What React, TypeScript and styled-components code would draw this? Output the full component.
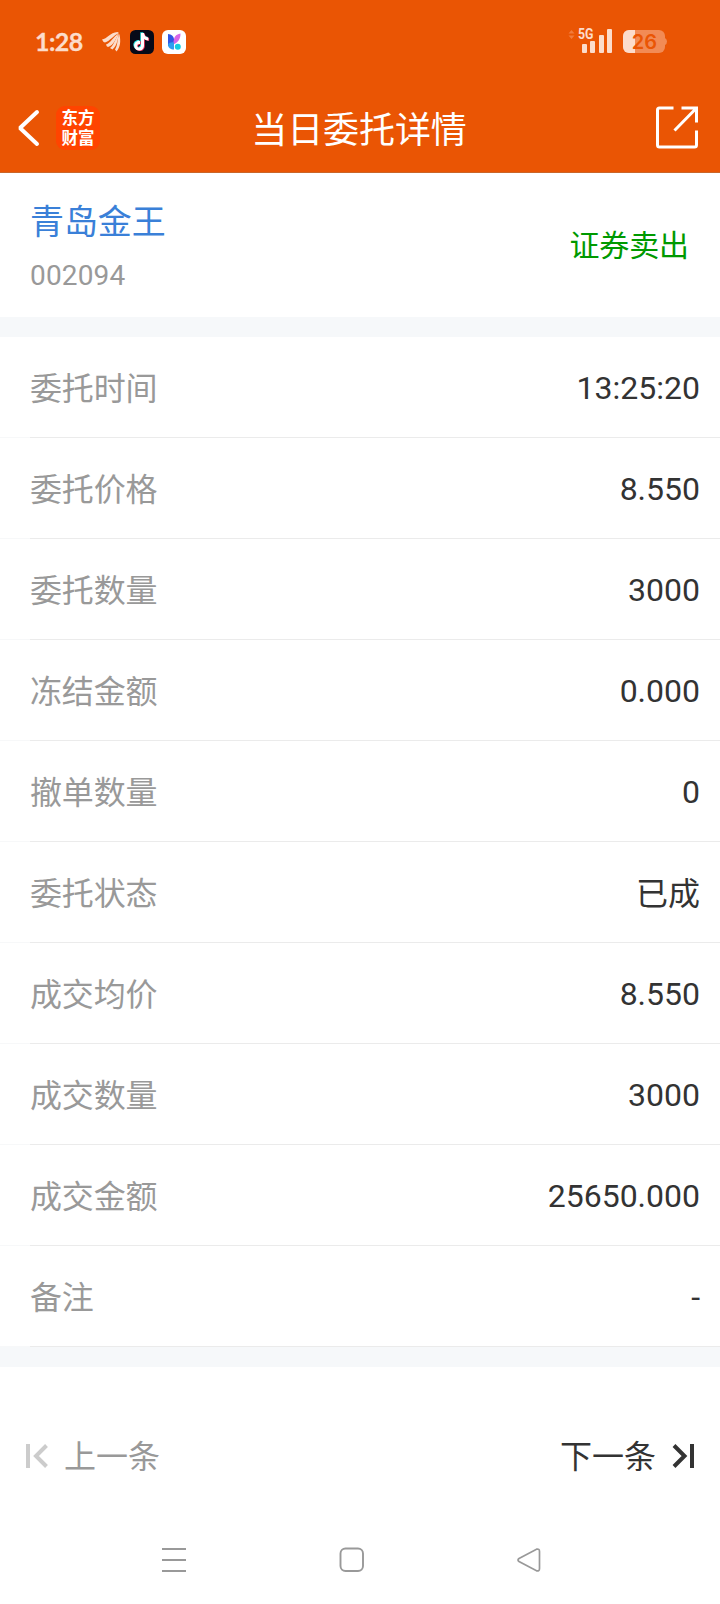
import React from "react";
import styled, { createGlobalStyle } from "styled-components";

const GlobalStyle = createGlobalStyle`
  * { box-sizing: border-box; }
  body {
    margin: 0;
    background: #fff;
    font-family: Roboto, "Noto Sans CJK SC", sans-serif;
    color: #333;
  }
  svg { display: block; flex: none; overflow: visible; }
`;

const Screen = styled.main`
  width: 720px;
  height: 1604px;
  display: flex;
  flex-direction: column;
  background: #fff;
  overflow: hidden;
`;

const Header = styled.header`
  height: 173px;
  background: #ea5504;
  border-bottom: 1px solid #c9662a;
  color: #fff;
`;

const StatusBar = styled.div`
  height: 84px;
  padding: 0 53px 0 35px;
  display: flex;
  align-items: center;
  justify-content: space-between;
  color: #fcdccb;
`;

const StatusGroup = styled.div<{ $gap: number }>`
  display: flex;
  align-items: center;
  gap: ${(p) => p.$gap}px;
`;

const Clock = styled.span`
  width: 49px;
  margin-right: 10px;
  padding-bottom: 3px;
  font: 700 25px/24px Lato, sans-serif;
  letter-spacing: -0.6px;
  -webkit-text-stroke: 0.3px #fcdccb;
  white-space: nowrap;
`;

const TitleBar = styled.div`
  height: 88px;
  display: grid;
  grid-template-columns: 1fr auto 1fr;
  align-items: center;
  padding: 0 21px 0 16px;
`;

const TitleLeft = styled.div`
  display: flex;
  align-items: center;
  gap: 15px;
`;

const TitleRight = styled.div`
  display: flex;
  justify-content: flex-end;
  padding-bottom: 2px;
`;

const Title = styled.h1`
  margin: 0;
  padding: 6px 0 0 3px;
  font-size: 36px;
  line-height: 44px;
  font-weight: 400;
  letter-spacing: -0.1px;
`;

const Logo = styled.div`
  width: 44px;
  height: 44px;
  border-radius: 9px;
  background: #ff4400;
  padding: 2px 0 0 5.500px;
  font: 700 16.5px/19.5px "Noto Sans CJK SC", sans-serif;
`;

const Stock = styled.section`
  height: 144px;
  padding: 2px 31px 0 30px;
  display: flex;
  justify-content: space-between;
  align-items: center;
`;

const StockName = styled.div`
  font-size: 34px;
  line-height: 46px;
  letter-spacing: -0.1px;
  color: #3a80d8;
`;

const StockCode = styled.div`
  margin-top: 13px;
  font-size: 28px;
  line-height: 36px;
  letter-spacing: 0.15px;
  color: #999;
`;

const Side = styled.div`
  padding-bottom: 1px;
  font-size: 30px;
  line-height: 40px;
  letter-spacing: -0.1px;
  color: #090;
`;

const Band = styled.div`
  height: 20px;
  background: #f6f8fa;
`;

const Row = styled.div`
  height: 101px;
  padding: 2px 20px 0 30px;
  display: flex;
  justify-content: space-between;
  align-items: center;
  background: linear-gradient(to right, #f7f8f9 30px, #ebebeb 30px) bottom / 100% 1px no-repeat;
  font-size: 32px;
  line-height: 44px;
`;

const Label = styled.span`
  color: #999;
  letter-spacing: -0.15px;
`;

const Value = styled.span<{ $numeric: boolean }>`
  padding-bottom: ${(p) => (p.$numeric ? 2 : 0)}px;
`;

const Pager = styled.nav`
  height: 180px;
  padding: 0 24px 2px 25px;
  display: flex;
  align-items: center;
  justify-content: space-between;
`;

const PagerButton = styled.button<{ $disabled?: boolean }>`
  padding: 0;
  border: 0;
  background: none;
  display: flex;
  align-items: center;
  gap: 15px;
  font: inherit;
  font-size: 32px;
  line-height: 44px;
  color: ${(p) => (p.$disabled ? "#999" : "#333")};
`;

const PagerText = styled.span`
  padding: 2px 1px 0 0;
`;

const SystemNav = styled.footer`
  height: 26px;
  padding: 0 178px 0 161px;
  display: flex;
  align-items: center;
  justify-content: space-between;
`;

const details = [
  ["委托时间", "13:25:20"],
  ["委托价格", "8.550"],
  ["委托数量", "3000"],
  ["冻结金额", "0.000"],
  ["撤单数量", "0"],
  ["委托状态", "已成"],
  ["成交均价", "8.550"],
  ["成交数量", "3000"],
  ["成交金额", "25650.000"],
  ["备注", "-"],
];

const WingIcon = () => (
  <svg width="20" height="22" viewBox="0 0 20 22" fill="#fcdccb">
    <path d="M0 8.500C5 8 8 1.500 15.500 1L17 2C12 4 8 10 3 11.500Q1 11 0 8.500Z" />
    <path d="M4 13.500C9 12 11 5.500 17 2.500C13.500 7 12.500 14 6 16Q4.500 15.500 4 13.500Z" />
    <path d="M8 17C13 13 13 7 17 3C15.500 8 15.500 14 10.500 18.500Z" />
    <path d="M13 18.500C16 14 15 8 17.300 3C19 10 18.500 16 14.500 20.500Z" />
  </svg>
);

const note =
  "M12 4h3c.3 2.700 1.800 4.200 4.300 4.500v3c-1.700 0-3.100-.5-4.300-1.400v6.300c0 6.500-9 6.800-9.800.9-.4-3.500 2.500-6 5.800-5.500v3.200c-3.500-.8-3.500 3.500-1 3.500 1.300 0 2-.9 2-2.200z";

const TikTokIcon = () => (
  <svg width="24" height="24" viewBox="0 0 24 24">
    <rect width="24" height="24" rx="5.500" fill="#070a18" />
    <g transform="translate(-1 -1)">
      <path d={note} fill="#25e5e2" transform="translate(-.8 -.7)" />
      <path d={note} fill="#f5345c" transform="translate(.8 .5)" />
      <path d={note} fill="#fff" />
    </g>
  </svg>
);

const LeafIcon = () => (
  <svg width="24" height="24" viewBox="0 0 24 24">
    <rect width="24" height="24" rx="6" fill="#fff" />
    <path d="M6 4C9.500 4.500 11.500 6 12 9V16H6Z" fill="#3156e4" />
    <path d="M12 9C12.500 6 15 4 18.500 3.500C18.500 9 16.500 12.500 11 14.500Z" fill="#d765e8" />
    <path d="M6 14.500C6.500 13 9.500 12 12 12.500V19.500C8.500 19.500 6 18 6 14.500Z" fill="#2f9df0" />
    <circle cx="15.800" cy="16.800" r="3" fill="#16cde0" />
  </svg>
);

const SignalIcon = () => (
  <svg width="46" height="26" viewBox="0 0 46 26" fill="#fcdccb">
    <path d="M.5 4.500 3.500 1 6.500 4.500ZM.5 6.500 3.500 10 6.500 6.500Z" fill="#f17b3d" />
    <text x="10" y="10" fontFamily="Roboto" fontSize="14.500" fontWeight="700" textLength="15.500" lengthAdjust="spacingAndGlyphs">5G</text>
    <rect x="14" y="15" width="5" height="9" rx="1" />
    <rect x="22" y="12" width="5" height="12" rx="1" />
    <rect x="31" y="6" width="5" height="18" rx="1" />
    <rect x="39" y="0" width="5" height="24" rx="1" />
  </svg>
);

const BatteryIcon = () => (
  <svg width="44" height="24" viewBox="0 0 44 24">
    <rect width="42" height="23" rx="6" fill="#f28b55" />
    <path d="M42 8q2 1 2 3.500t-2 3.500z" fill="#f28b55" />
    <path d="M12 0H6a6 6 0 0 0-6 6v11a6 6 0 0 0 6 6h6z" fill="#fcdccb" />
    <text x="21.500" y="19" textAnchor="middle" fontFamily="Inter" fontSize="20" fontWeight="600" fill="#ea5504">26</text>
  </svg>
);

const BackIcon = () => (
  <svg width="25" height="38" viewBox="0 0 25 38" fill="none" stroke="#fff" strokeWidth="4" strokeLinecap="round">
    <path d="M21 3 4 19 21 35" strokeLinejoin="bevel" />
  </svg>
);

const ShareIcon = () => (
  <svg width="43" height="43" viewBox="0 0 43 43" fill="none" stroke="#fff" strokeWidth="3">
    <path d="M17.500 2H3.500Q1.500 2 1.500 4V39Q1.500 41 3.500 41H38.500Q40.500 41 40.500 39V24.500M25.500 2H40.500V16.500M40.500 2 18.500 24.500" />
  </svg>
);

const StepIcon = ({ next = false }: { next?: boolean }) => (
  <svg width="24" height="24" viewBox="0 0 24 24" fill="none" stroke={next ? "#333" : "#ccc"} strokeWidth="4">
    {next ? <path d="M2 1.500 12.500 12 2 22.500M20 0V24" /> : <path d="M3 0V24M21.500 1.500 11 12 21.500 22.500" />}
  </svg>
);

const MenuIcon = () => (
  <svg width="26" height="26" viewBox="0 0 26 26" stroke="#999" strokeWidth="2">
    <path d="M1 2H25M1 13H25M1 24H25" />
  </svg>
);

const HomeIcon = () => (
  <svg width="26" height="26" viewBox="0 0 26 26">
    <rect x="1.500" y="1.500" width="22.500" height="22.500" rx="5" fill="none" stroke="#999" strokeWidth="1.900" />
  </svg>
);

const NavBackIcon = () => (
  <svg width="25" height="26" viewBox="0 0 25 26">
    <path d="M2 11.500 19.500 2.200Q22.500 1.500 22.500 4.500V21.500Q22.500 24.500 19.500 23.800L2 14.500Q0 13 2 11.500Z" fill="none" stroke="#999" strokeWidth="1.700" />
  </svg>
);

export default function App() {
  return (
    <Screen lang="zh-CN">
      <GlobalStyle />
      <Header>
        <StatusBar>
          <StatusGroup $gap={8}>
            <Clock>1:28</Clock>
            <WingIcon />
            <TikTokIcon />
            <LeafIcon />
          </StatusGroup>
          <StatusGroup $gap={9}>
            <SignalIcon />
            <BatteryIcon />
          </StatusGroup>
        </StatusBar>
        <TitleBar>
          <TitleLeft>
            <BackIcon />
            <Logo>
              东方
              <br />
              财富
            </Logo>
          </TitleLeft>
          <Title>当日委托详情</Title>
          <TitleRight>
            <ShareIcon />
          </TitleRight>
        </TitleBar>
      </Header>
      <Stock>
        <div>
          <StockName>青岛金王</StockName>
          <StockCode>002094</StockCode>
        </div>
        <Side>证券卖出</Side>
      </Stock>
      <Band />
      {details.map(([label, value]) => (
        <Row key={label}>
          <Label>{label}</Label>
          <Value $numeric={/^[\d.:-]+$/.test(value)}>{value}</Value>
        </Row>
      ))}
      <Band />
      <Pager>
        <PagerButton $disabled>
          <StepIcon />
          <PagerText>上一条</PagerText>
        </PagerButton>
        <PagerButton>
          <PagerText>下一条</PagerText>
          <StepIcon next />
        </PagerButton>
      </Pager>
      <SystemNav>
        <MenuIcon />
        <HomeIcon />
        <NavBackIcon />
      </SystemNav>
    </Screen>
  );
}
